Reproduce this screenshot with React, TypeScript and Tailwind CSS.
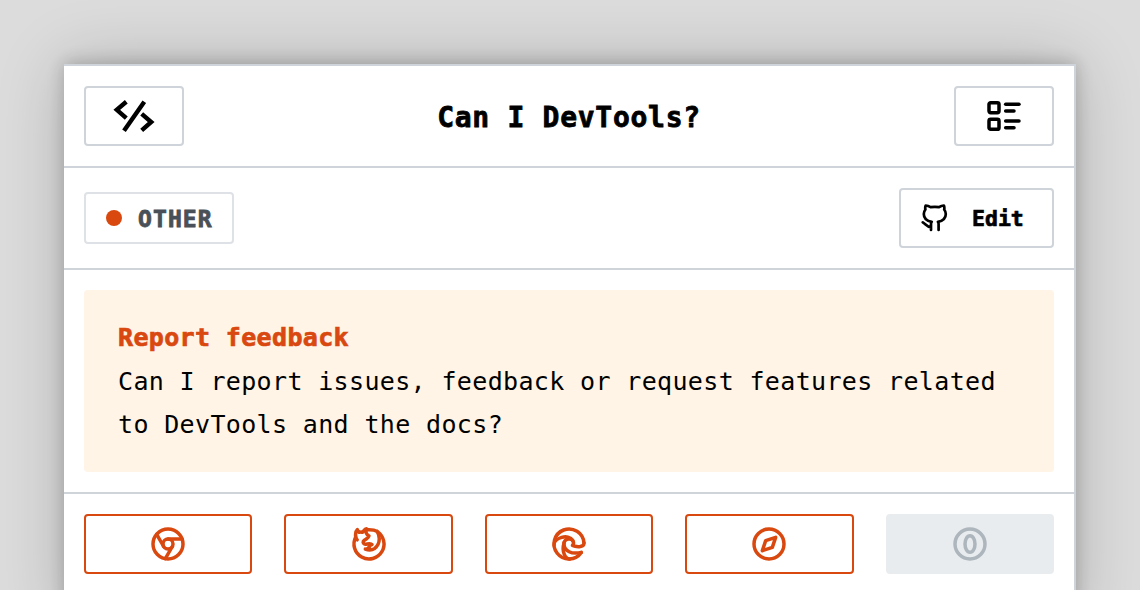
import { TbBrandChrome, TbBrandFirefox, TbBrandEdge, TbBrandSafari, TbListDetails } from "react-icons/tb";

function OperaIcon({ size, className }: { size: number; className?: string }) {
  return (
    <svg width={size} height={size} viewBox="0 0 24 24" fill="none" stroke="currentColor" className={className}>
      <circle cx="12" cy="12" r="9" />
      <ellipse cx="12" cy="12" rx="3" ry="5" />
    </svg>
  );
}

const browsers = [
  { name: "Chrome", Icon: TbBrandChrome, supported: true },
  { name: "Firefox", Icon: TbBrandFirefox, supported: true },
  { name: "Edge", Icon: TbBrandEdge, supported: true },
  { name: "Safari", Icon: TbBrandSafari, supported: true },
  { name: "Opera", Icon: OperaIcon, supported: false },
];

function CodeIcon() {
  return (
    <svg width="44" height="36" viewBox="0 0 44 36" fill="none" stroke="currentColor" strokeWidth="4.4">
      <path d="M14.3 3.8 4.8 11.8 14.3 20.2M32.3 3.8 12 32.8M29.7 15.8 39.2 24 29.7 32.3" />
    </svg>
  );
}

function GithubIcon() {
  return (
    <svg width="27" height="28" viewBox="0 0 27 28" fill="none" stroke="currentColor" strokeWidth="2.7" strokeLinecap="round" strokeLinejoin="round">
      <path d="M10 26v-6c0-1 .2-1.7.7-2.2C5.800 17 2.800 14.600 2.800 10c0-1.900.7-3.300 1.600-4.500-.3-1.300-.2-2.700.3-4 1.700.1 3.500.8 4.900 1.700 2.800-.5 5.600-.5 8.400 0 1.400-.9 3.200-1.600 4.900-1.700.5 1.300.6 2.700.3 4 .9 1.200 1.600 2.600 1.600 4.500 0 4.600-3 7-7.900 7.800.5.5.7 1.200.7 2.200V26M10 23.300C6 23.200 5 20.300 1.800 18.300" />
    </svg>
  );
}

export default function App() {
  return (
    <div className="h-[590px] overflow-hidden bg-[#dcdcdc] px-16 pt-16 font-['DejaVu_Sans_Mono','Liberation_Mono',monospace] text-black">
      <main className="h-[560px] w-[1012px] border-t-2 border-r-2 border-[#ced4da] bg-white shadow-[0_0_64px_rgba(0,0,0,0.2),0_-2px_16px_rgba(0,0,0,0.2)]">
        <header className="flex h-[102px] items-center justify-between border-b-2 border-[#ced4da] px-5">
          <button aria-label="Home" className="flex h-[60px] w-[100px] items-center justify-center rounded-[4px] border-2 border-[#ced4da]">
            <CodeIcon />
          </button>
          <h1 className="pt-[3px] text-[28px] font-bold tracking-[0.72px] [-webkit-text-stroke:0.8px_currentColor]">Can I DevTools?</h1>
          <button aria-label="List" className="flex h-[60px] w-[100px] items-center justify-center rounded-[4px] border-2 border-[#ced4da]">
            <TbListDetails size={40} className="stroke-[2.1]" />
          </button>
        </header>
        <section className="flex h-[102px] items-center justify-between border-b-2 border-[#ced4da] px-5">
          <div className="flex h-[52px] w-[150px] items-center gap-4 rounded-[4px] border-2 border-[#dee2e6] pl-5 text-[23px] font-bold tracking-[1.1px] text-[#495057]">
            <span className="size-4 rounded-full bg-[#d9480f]" />
            <span className="pt-[2px] [-webkit-text-stroke:0.8px_currentColor]">OTHER</span>
          </div>
          <button className="flex h-[60px] w-[155px] items-center gap-6 rounded-[4px] border-2 border-[#ced4da] pl-5 text-[21.5px] font-bold">
            <GithubIcon />
            <span className="pt-[2px] [-webkit-text-stroke:0.7px_currentColor]">Edit</span>
          </button>
        </section>
        <section className="border-b-2 border-[#ced4da] p-5">
          <div className="h-[182px] rounded-[4px] bg-[#fff4e6] px-[34px] pt-[26px] text-[25px] leading-[43.5px] tracking-[0.35px]">
            <h2 className="font-bold text-[#d9480f] [-webkit-text-stroke:0.7px_currentColor]">Report feedback</h2>
            <p>Can I report issues, feedback or request features related to DevTools and the docs?</p>
          </div>
        </section>
        <section className="grid grid-cols-5 gap-8 p-5">
          {browsers.map(({ name, Icon, supported }) => (
            <div
              key={name}
              title={name}
              className={
                supported
                  ? "flex h-[60px] items-center justify-center rounded-[4px] border-2 border-[#d9480f] text-[#d9480f]"
                  : "flex h-[60px] items-center justify-center rounded-[4px] bg-[#e9ecef] text-[#adb5bd]"
              }
            >
              <Icon size={40} className="stroke-[2.1]" />
            </div>
          ))}
        </section>
      </main>
    </div>
  );
}
